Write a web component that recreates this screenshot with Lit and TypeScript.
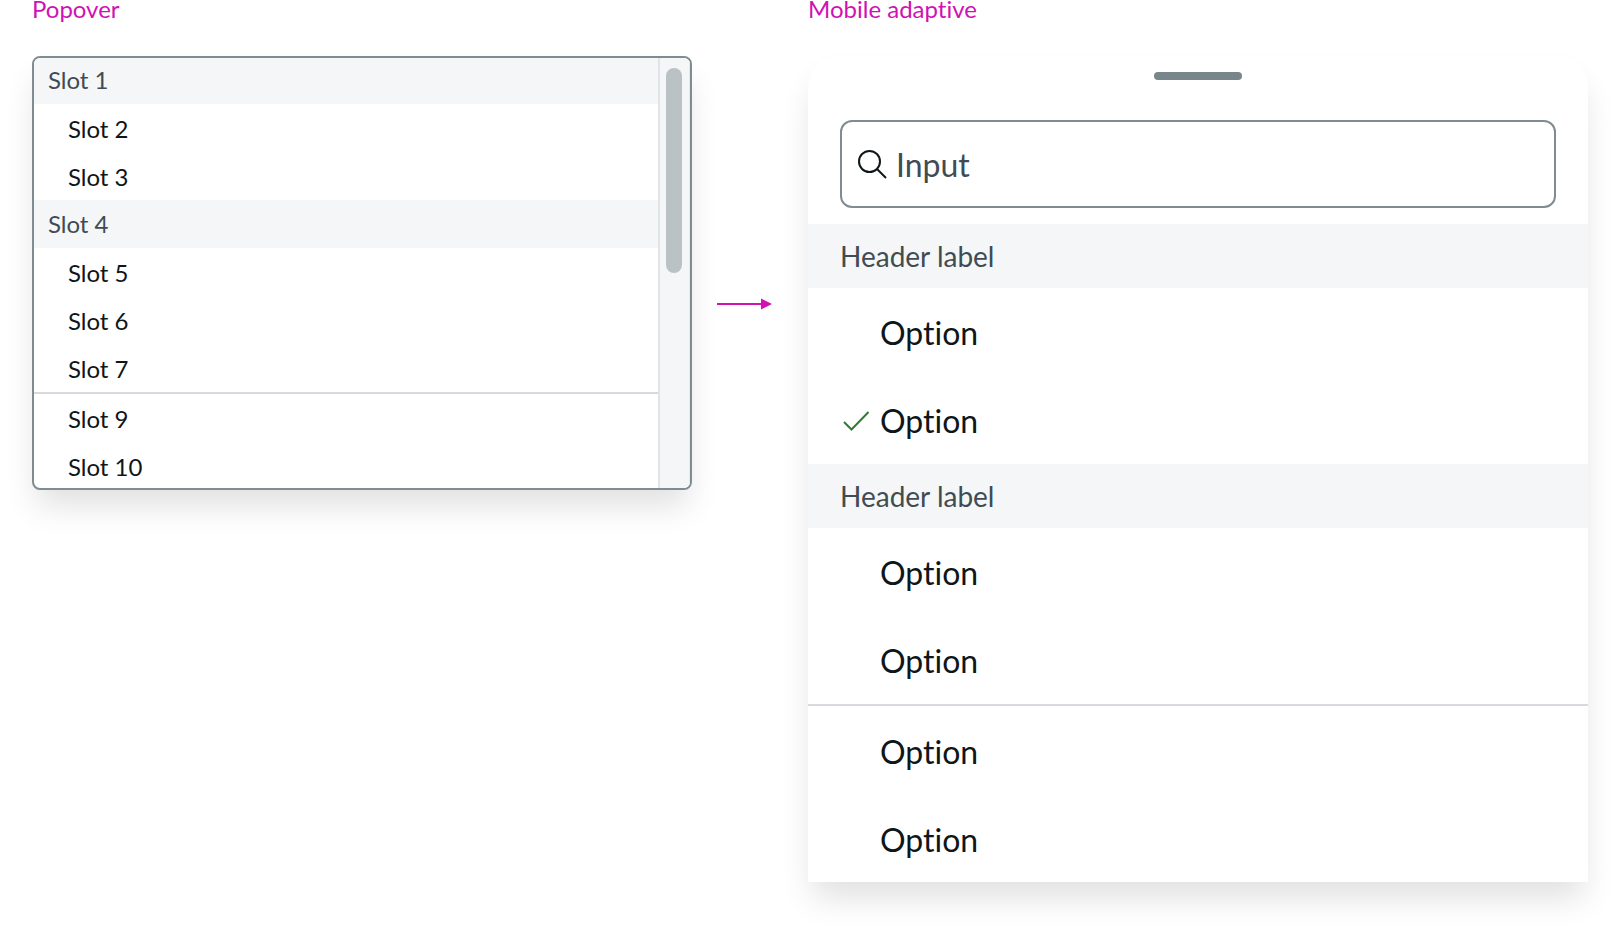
import { LitElement, html, css } from "lit";
import { customElement } from "lit/decorators.js";

@customElement("app-root")
export class AppRoot extends LitElement {
  static styles = css`
    :host {
      display: flex;
      width: 1620px;
      height: 938px;
      overflow: hidden;
      background: #fff;
      font-family: Lato, "Open Sans", sans-serif;
      font-variant-ligatures: none;
      color: #0f1619;
    }
    .left {
      width: 660px;
      margin-left: 32px;
      flex: none;
    }
    .label {
      height: 62px;
      margin-top: -6px;
      font-size: 24px;
      line-height: 29px;
      color: #d111b4;
    }
    .popover {
      display: flex;
      height: 434px;
      box-sizing: border-box;
      border: 2px solid #7f8c91;
      border-radius: 8px;
      overflow: hidden;
      background: #fff;
      box-shadow: 0 20px 32px -4px rgba(0, 0, 0, 0.12);
    }
    .slots {
      flex: 1;
      min-width: 0;
      margin-top: -2px;
      overflow: hidden;
    }
    .slot {
      height: 48px;
      padding-left: 14px;
      font-size: 24px;
      line-height: 50px;
    }
    .slot.item {
      padding-left: 34px;
    }
    .slot.head {
      background: #f5f6f8;
      color: #3f4c52;
      line-height: 48px;
    }
    .rule {
      height: 2px;
      background: #d6dade;
    }
    .track {
      flex: none;
      width: 32px;
      box-sizing: border-box;
      padding: 10px 7px 0 6px;
      border-left: 2px solid #e1e4e7;
      border-right: 1px solid #e6e8ea;
      background: #f5f6f8;
    }
    .thumb {
      height: 205px;
      border-radius: 8px;
      background: #bac2c5;
    }
    .gap {
      flex: none;
      width: 116px;
      padding: 297px 0 0 25px;
      box-sizing: border-box;
    }
    .gap svg {
      display: block;
    }
    .right {
      width: 780px;
      flex: none;
    }
    .sheet {
      height: 826px;
      border-radius: 32px 32px 0 0;
      background: #fff;
      box-shadow: 0 20px 32px -4px rgba(0, 0, 0, 0.12);
    }
    .grip {
      display: flex;
      justify-content: center;
      padding: 16px 0 40px;
    }
    .grip i {
      display: block;
      width: 88px;
      height: 8px;
      border-radius: 4px;
      background: #78858a;
    }
    .field {
      display: flex;
      align-items: center;
      gap: 9px;
      height: 88px;
      margin: 0 32px 16px;
      padding-left: 15px;
      box-sizing: border-box;
      border: 2px solid #7f8c91;
      border-radius: 12px;
      font-size: 32px;
      color: #3f4c52;
    }
    .field svg {
      flex: none;
    }
    .group {
      height: 64px;
      padding-left: 32px;
      background: #f5f6f8;
      font-size: 28px;
      line-height: 64px;
      color: #3f4c52;
    }
    .option {
      display: flex;
      align-items: center;
      height: 88px;
      box-sizing: border-box;
      padding-left: 32px;
      font-size: 32px;
    }
    .option.low {
      padding-top: 2px;
    }
    .tick {
      flex: none;
      width: 40px;
      display: flex;
    }
    .tick svg {
      margin: 2px 0 0 2px;
    }
  `;

  slot_(name: string, head = false) {
    return html`<div class="slot ${head ? "head" : "item"}">${name}</div>`;
  }

  option(checked = false, low = false) {
    return html`<div class="option ${low ? "low" : ""}">
      <span class="tick">
        ${checked
          ? html`<svg width="28" height="24" viewBox="0 0 28 24" fill="none">
              <path d="M2 13 L9.500 20.500 L26.500 3" stroke="#2e7d32" stroke-width="2" />
            </svg>`
          : ""}
      </span>
      Option
    </div>`;
  }

  render() {
    return html`
      <div class="left">
        <div class="label">Popover</div>
        <div class="popover">
          <div class="slots">
            ${this.slot_("Slot 1", true)} ${this.slot_("Slot 2")} ${this.slot_("Slot 3")}
            ${this.slot_("Slot 4", true)} ${this.slot_("Slot 5")} ${this.slot_("Slot 6")}
            ${this.slot_("Slot 7")}
            <div class="rule"></div>
            ${this.slot_("Slot 9")} ${this.slot_("Slot 10")}
          </div>
          <div class="track"><div class="thumb"></div></div>
        </div>
      </div>
      <div class="gap">
        <svg width="56" height="14" viewBox="0 0 56 14">
          <rect x="0" y="6" width="46" height="2" fill="#d111b4" />
          <path d="M44 1.500 L55 7 L44 12.500 Z" fill="#d111b4" />
        </svg>
      </div>
      <div class="right">
        <div class="label">Mobile adaptive</div>
        <div class="sheet">
          <div class="grip"><i></i></div>
          <div class="field">
            <svg width="30" height="30" viewBox="0 0 30 30" fill="none" stroke="#0f1619" stroke-width="2">
              <circle cx="12.500" cy="12.500" r="10.500" />
              <path d="M20 20 L29 29" />
            </svg>
            Input
          </div>
          <div class="group">Header label</div>
          ${this.option()} ${this.option(true)}
          <div class="group">Header label</div>
          ${this.option()} ${this.option()}
          <div class="rule"></div>
          ${this.option(false, true)} ${this.option(false, true)}
        </div>
      </div>
    `;
  }
}
